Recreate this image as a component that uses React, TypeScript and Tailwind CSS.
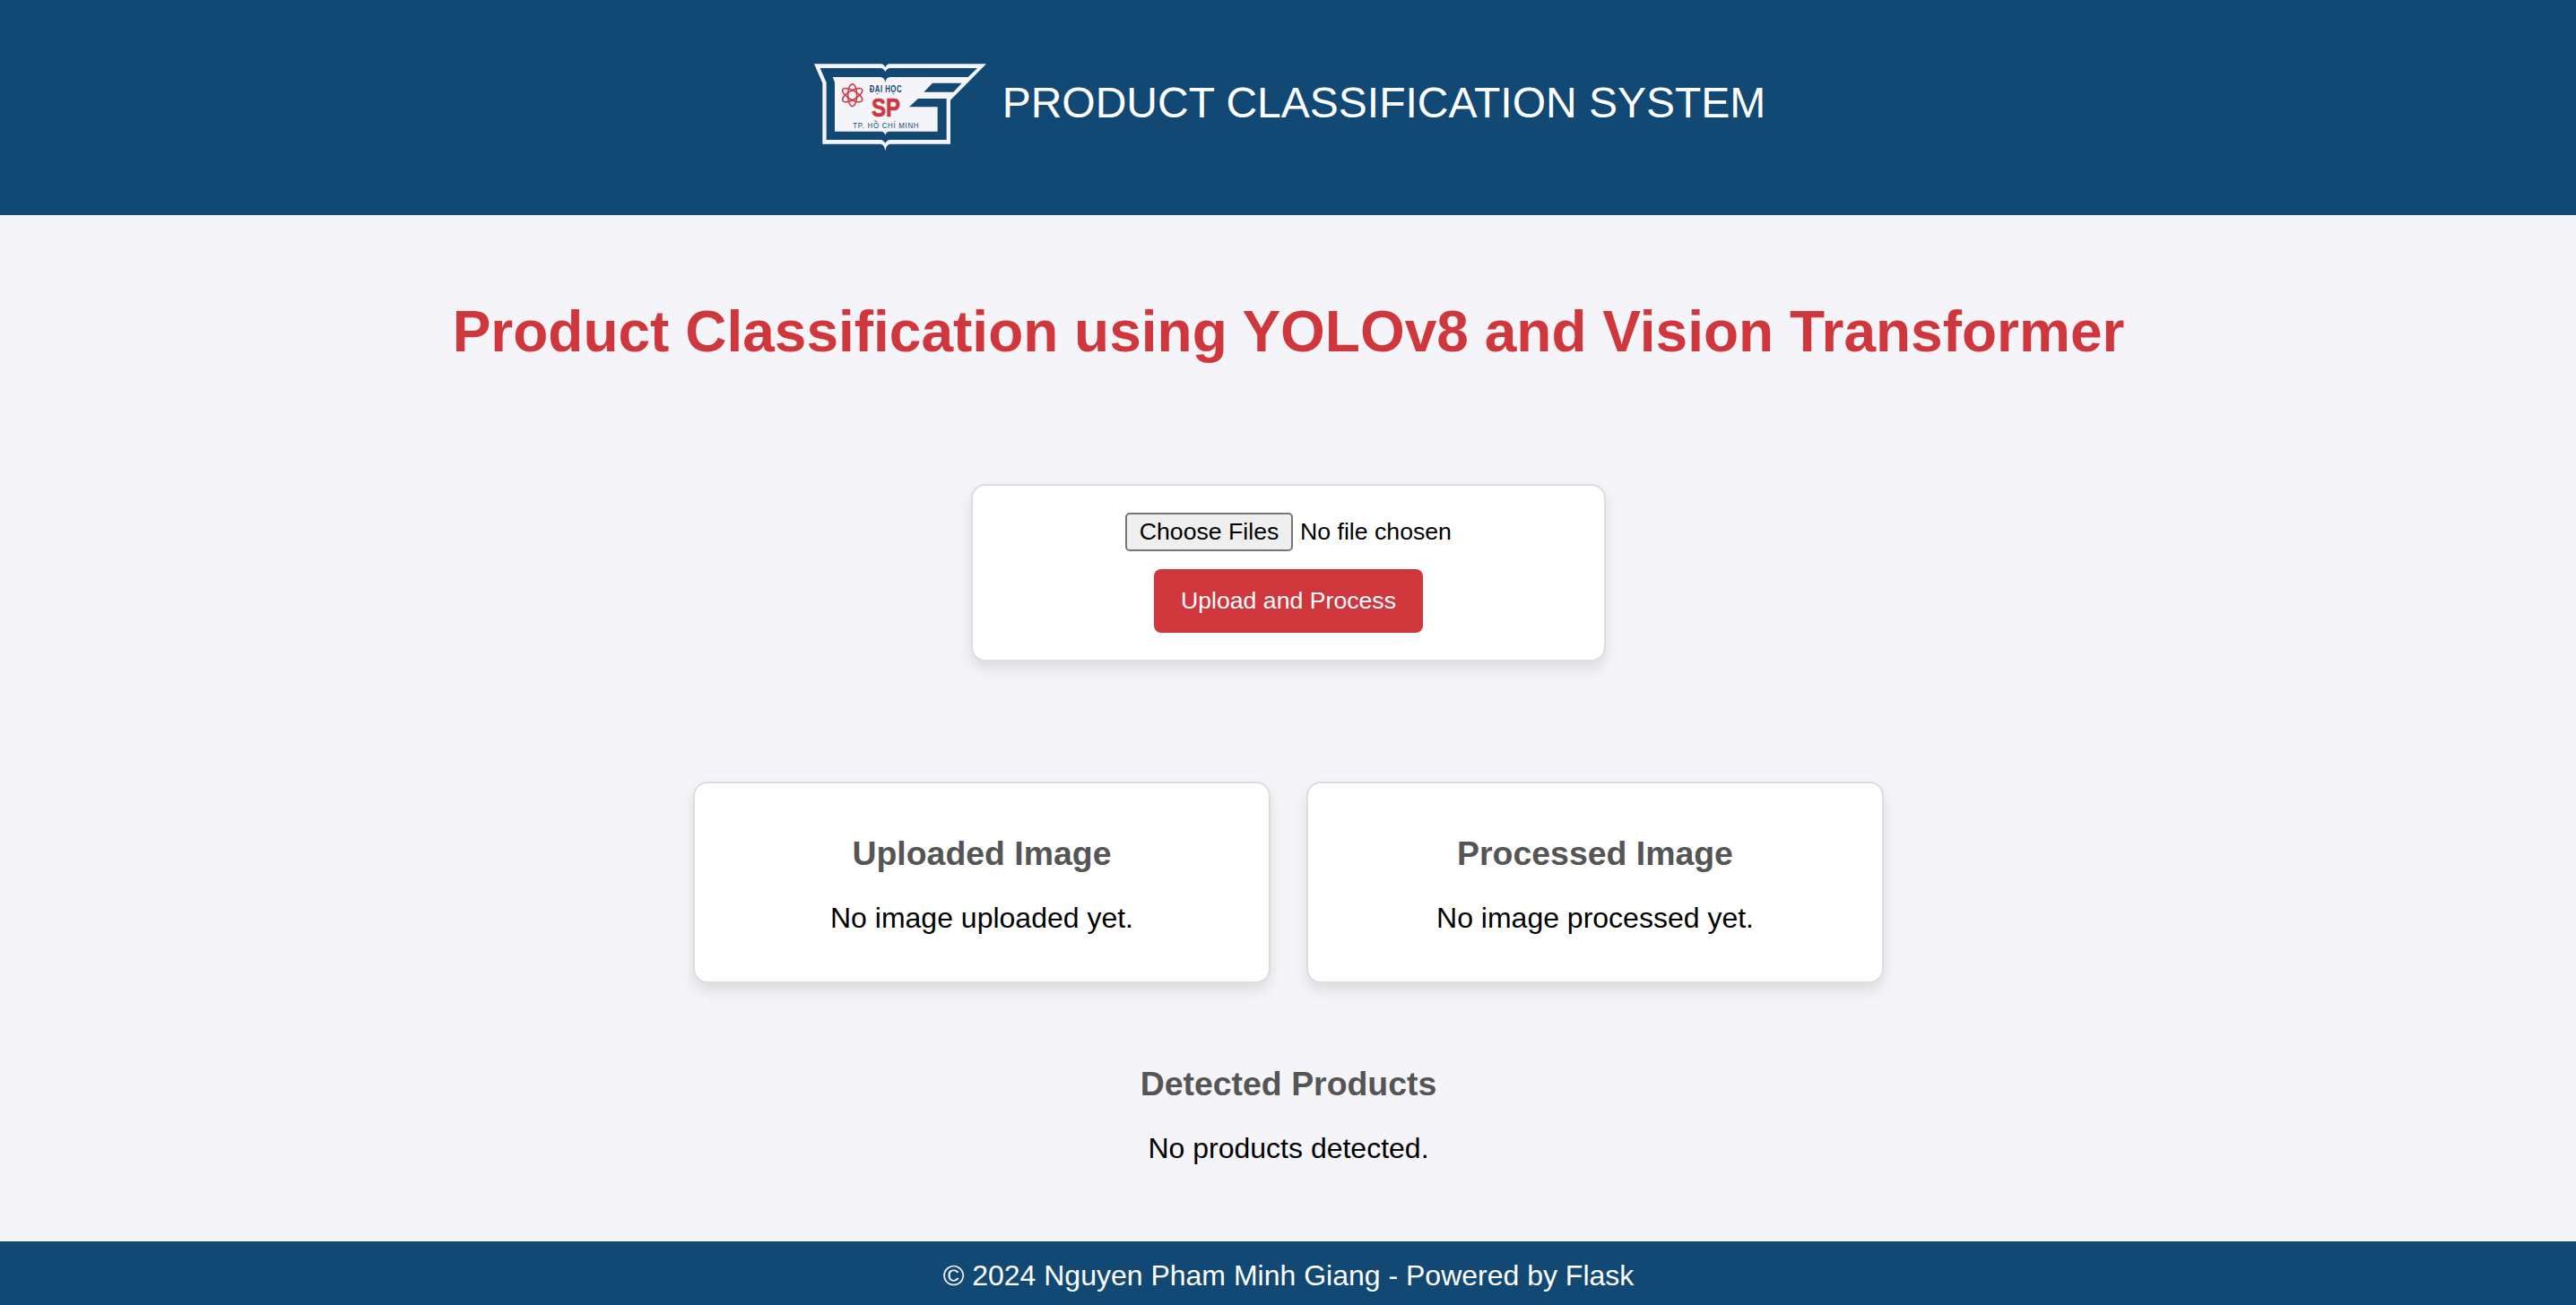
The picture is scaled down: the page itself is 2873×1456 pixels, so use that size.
function Logo() {
  return (
    <svg viewBox="54 60 576 300" className="h-[100px] w-[192px] shrink-0" aria-label="Logo">
      <path
        fill="#f4f4f9"
        d="M54 64H278Q288 65 292 76Q296 65 306 64H630L510 185V332H308Q295 334 292 355Q289 334 277 332H82V128Z"
      />
      <path
        fill="#124874"
        d="M74 78H275Q287 79 292 90Q297 79 309 78H600L569 108H308Q295 109 292 125Q289 109 276 108H116L123 126V290H280Q289 291 292 302Q295 291 304 290H467V208H372L402 180H497V318H308Q297 319 292 330Q287 319 276 318H95V126Z"
      />
      <path fill="#124874" d="M450 128H548L520 158H421Z" />
      <g fill="none" stroke="#cf373d" strokeWidth="4.5">
        <ellipse cx="182" cy="168.500" rx="15" ry="37.500" />
        <ellipse cx="182" cy="168.500" rx="15" ry="37.500" transform="rotate(60 182 168.500)" />
        <ellipse cx="182" cy="168.500" rx="15" ry="37.500" transform="rotate(-60 182 168.500)" />
      </g>
      <g fontFamily="Liberation Sans, Arial, sans-serif">
        <text transform="translate(239 160) scale(0.78 1)" fontSize="30" fontWeight="bold" fill="#124874" textLength="138" lengthAdjust="spacing">ĐẠI HỌC</text>
        <text x="246" y="240" fontSize="88" fontWeight="bold" fill="#cf373d" stroke="#cf373d" strokeWidth="2" textLength="96" lengthAdjust="spacingAndGlyphs">SP</text>
        <text transform="translate(184 279) scale(0.82 1)" fontSize="29" fill="#124874" textLength="268" lengthAdjust="spacing">TP. HỒ CHÍ MINH</text>
      </g>
    </svg>
  );
}

function ImageCard({ title, message }: { title: string; message: string }) {
  return (
    <section className="flex h-[225px] w-[644px] flex-col items-center rounded-[16px] border-2 border-[#dddddd] bg-white pt-14 shadow-[0_8px_16px_rgba(0,0,0,0.1)]">
      <h3 className="text-[37.44px] leading-[44px] font-bold text-[#555555]">{title}</h3>
      <p className="mt-[30px] text-[32px] leading-[40px]">{message}</p>
    </section>
  );
}

export default function App() {
  return (
    <div className="flex h-[1456px] w-full flex-col bg-[#f4f4f9] font-['Liberation_Sans',Arial,sans-serif] text-black">
      <header className="flex h-[240px] shrink-0 justify-center bg-[#124874] pt-[70px] pl-1 text-white">
        <Logo />
        <span className="mt-[17px] ml-[18px] text-[48px] leading-[56px] whitespace-nowrap">PRODUCT CLASSIFICATION SYSTEM</span>
      </header>

      <main className="flex grow flex-col items-center pl-px">
        <h1 className="mt-[93px] text-[64px] leading-[74px] font-bold whitespace-nowrap text-[#cf373d]">
          Product Classification using YOLOv8 and Vision Transformer
        </h1>

        <form className="mt-[133px] flex h-[198px] w-[708px] flex-col items-center rounded-[16px] border-2 border-[#dddddd] bg-white pt-[30px] shadow-[0_8px_16px_rgba(0,0,0,0.1)]">
          <div className="flex items-center gap-2 text-[26.67px] leading-[30px]">
            <button type="button" className="h-[43px] w-[187px] rounded-[5px] border-2 border-[#767676] bg-[#efefef] pb-0.5 whitespace-nowrap">
              Choose Files
            </button>
            <span className="pb-0.5">No file chosen</span>
          </div>
          <button type="button" className="mt-5 h-[71px] w-[300px] rounded-[8px] bg-[#cf373d] pb-0.5 text-[26.67px] leading-[30px] text-white">
            Upload and Process
          </button>
        </form>

        <div className="mt-[134px] flex gap-10">
          <ImageCard title="Uploaded Image" message="No image uploaded yet." />
          <ImageCard title="Processed Image" message="No image processed yet." />
        </div>

        <h3 className="mt-[90px] text-[37.44px] leading-[44px] font-bold text-[#555555]">Detected Products</h3>
        <p className="mt-[30px] text-[32px] leading-[40px]">No products detected.</p>
      </main>

      <footer className="flex h-[71px] shrink-0 justify-center bg-[#124874] pt-[18px] pl-px text-[32px] leading-[40px] text-white">
        © 2024 Nguyen Pham Minh Giang - Powered by Flask
      </footer>
    </div>
  );
}
